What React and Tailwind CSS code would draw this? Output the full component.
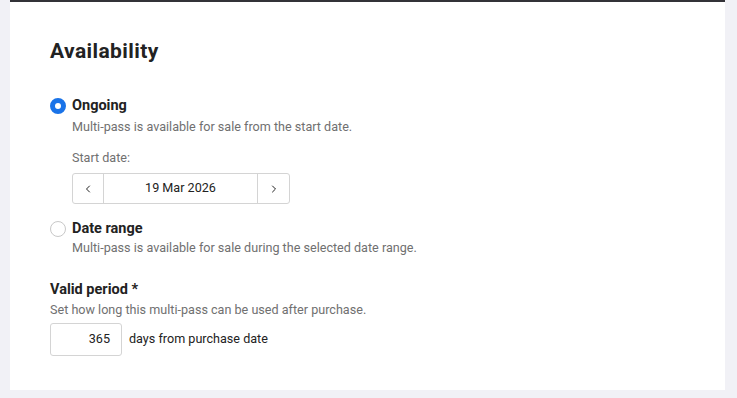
import { ChevronLeft, ChevronRight } from 'lucide-react';

export default function App() {
    return (
        <div className="min-h-[398px] w-[737px] bg-[#f1f1f6] pl-[10px] pr-[12px] pb-[8px] font-['Roboto',sans-serif] text-[#222]">
            <div className="bg-white border-t-2 border-[#333238] h-[390px] px-[40px] pt-[35px]">
                <h2 className="text-[21px] tracking-[0.4px] font-bold leading-[28px] text-[#222]">Availability</h2>

                {/* Ongoing */}
                <div className="mt-[31px] flex items-start gap-[6px]">
                    <div className="mt-[2px] w-4 h-4 rounded-full border-[5px] border-[#1a73e8] bg-white shrink-0" />
                    <div className="flex flex-col">
                        <span className="text-[14.5px] font-bold leading-[20px]">Ongoing</span>
                        <span className="text-[12.6px] leading-[18px] text-[#707070] mt-[2px]">Multi-pass is available for sale from the start date.</span>
                        <span className="text-[12.6px] leading-[18px] text-[#707070] mt-[13px]">Start date:</span>
                        <div className="mt-[6px] flex h-[31px] w-[218px] rounded-[3px] border border-[#d4d4d4] text-[12.6px] text-[#222]">
                            <button className="w-[31px] flex items-center justify-center border-r border-[#d4d4d4]">
                                <ChevronLeft size={12} strokeWidth={2} />
                            </button>
                            <div className="flex-1 flex items-center justify-center">19 Mar 2026</div>
                            <button className="w-[32px] flex items-center justify-center border-l border-[#d4d4d4]">
                                <ChevronRight size={12} strokeWidth={2} />
                            </button>
                        </div>
                    </div>
                </div>

                {/* Date range */}
                <div className="mt-[15px] flex items-start gap-[6px]">
                    <div className="mt-[2px] w-4 h-4 rounded-full border border-[#c8c8c8] bg-white shrink-0" />
                    <div className="flex flex-col">
                        <span className="text-[14.5px] font-bold leading-[20px]">Date range</span>
                        <span className="text-[12.6px] leading-[18px] text-[#707070]">Multi-pass is available for sale during the selected date range.</span>
                    </div>
                </div>

                {/* Valid period */}
                <div className="mt-[23px] flex flex-col">
                    <span className="text-[14.5px] font-bold leading-[20px]">Valid period *</span>
                    <span className="text-[12.6px] leading-[18px] text-[#707070] mt-[1px]">Set how long this multi-pass can be used after purchase.</span>
                    <div className="mt-[4px] flex items-center gap-[7px]">
                        <div className="w-[72px] h-[33px] rounded-[3px] border border-[#d4d4d4] flex items-center justify-end pr-[11px] text-[12.6px]">365</div>
                        <span className="text-[12.6px]">days from purchase date</span>
                    </div>
                </div>
            </div>
        </div>
    );
}
